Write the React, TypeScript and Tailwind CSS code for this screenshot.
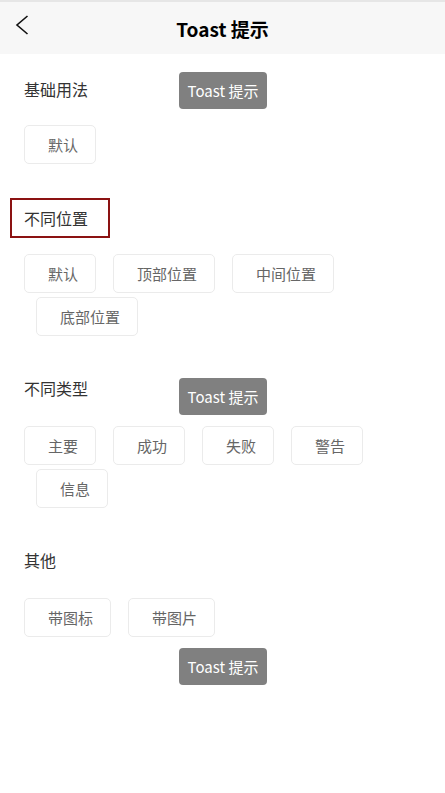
import React from 'react';

const font = { fontFamily: '"Noto Sans CJK SC", "Noto Sans", sans-serif' };

const Btn: React.FC<{ label: string }> = ({ label }) => (
  <button className="h-[39px] pl-[23px] pr-[17px] rounded-[5px] border border-[#ebebeb] bg-white text-[15px] text-[#666] leading-none">
    {label}
  </button>
);

const Toast: React.FC = () => (
  <div className="w-[88px] h-[37px] rounded-[4px] bg-[#808080] text-white text-[15px] flex items-center justify-center leading-none">
    Toast 提示
  </div>
);

export default function App() {
  return (
    <div className="w-[445px] min-h-[793px] bg-white" style={font}>
      {/* Header */}
      <div className="h-[54px] bg-[#f7f7f7] border-t-2 border-[#e6e6e6] flex items-center relative">
        <svg className="absolute left-[14px] top-[12px]" width="16" height="22" viewBox="0 0 16 22" fill="none">
          <path d="M13.5 2 L3 11 L13.5 20" stroke="#111" strokeWidth="1.6" />
        </svg>
        <div className="flex-1 text-center text-[19px] font-bold text-black leading-none">Toast 提示</div>
      </div>

      {/* 基础用法 */}
      <div className="flex items-start mt-[18px]">
        <div className="w-[179px] pl-[24px] pt-[5px] text-[16px] text-[#333] leading-[24px]">基础用法</div>
        <Toast />
      </div>
      <div className="pl-[24px] mt-[16px]">
        <Btn label="默认" />
      </div>

      {/* 不同位置 */}
      <div className="ml-[10px] mt-[34px] w-[100px] h-[40px] border-2 border-[#8b1212] flex items-center pl-[12px] text-[16px] text-[#333]">
        不同位置
      </div>
      <div className="flex gap-[17px] pl-[24px] mt-[16px]">
        <Btn label="默认" />
        <Btn label="顶部位置" />
        <Btn label="中间位置" />
      </div>
      <div className="flex pl-[36px] mt-[4px]">
        <Btn label="底部位置" />
      </div>

      {/* 不同类型 */}
      <div className="flex items-start mt-[42px]">
        <div className="w-[179px] pl-[24px] text-[16px] text-[#333] leading-[24px] -mt-[2px]">不同类型</div>
        <Toast />
      </div>
      <div className="flex gap-[17px] pl-[24px] mt-[11px]">
        <Btn label="主要" />
        <Btn label="成功" />
        <Btn label="失败" />
        <Btn label="警告" />
      </div>
      <div className="flex pl-[36px] mt-[4px]">
        <Btn label="信息" />
      </div>

      {/* 其他 */}
      <div className="pl-[24px] mt-[40px] text-[16px] text-[#333] leading-[24px]">其他</div>
      <div className="flex gap-[17px] pl-[24px] mt-[26px]">
        <Btn label="带图标" />
        <Btn label="带图片" />
      </div>
      <div className="pl-[179px] mt-[11px]">
        <Toast />
      </div>
    </div>
  );
}
